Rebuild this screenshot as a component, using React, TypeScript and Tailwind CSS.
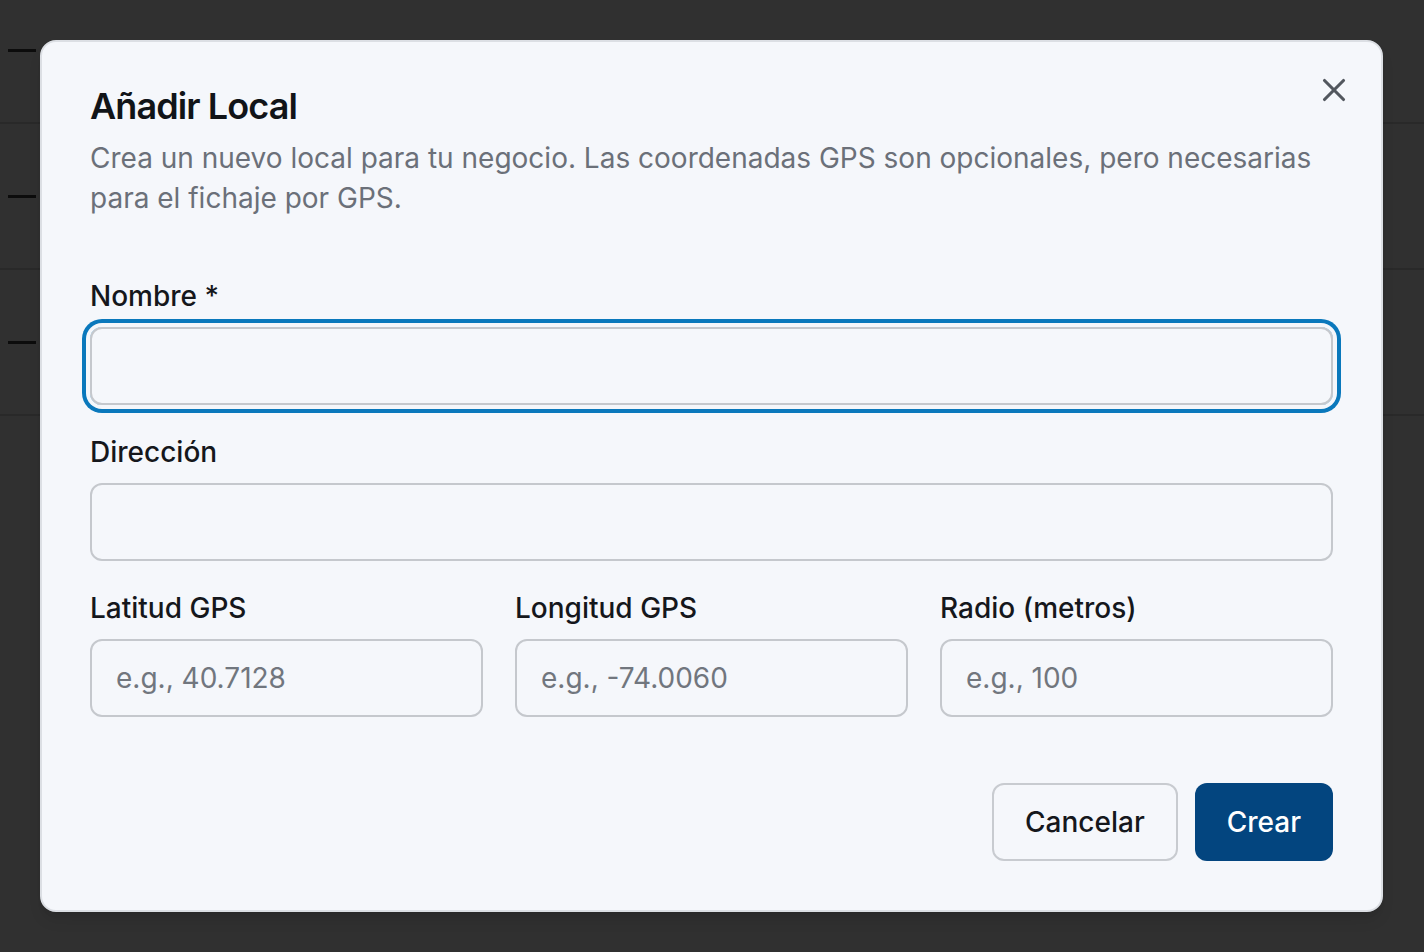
import React from 'react'
import { X } from 'lucide-react'

const rows = [0, 1, 2]

function Field({ label, placeholder, focused }: { label: string; placeholder?: string; focused?: boolean }) {
  return (
    <div className="flex flex-col gap-[17px]">
      <label className="text-[28px] leading-none font-medium text-[#15171c]">{label}</label>
      <input
        placeholder={placeholder}
        className={`h-[78px] w-full rounded-[12px] border-2 border-[#c5c8cd] bg-transparent px-[24px] text-[28px] text-[#15171c] placeholder:text-[#71767e] outline-none ${
          focused ? 'ring-[4px] ring-[#0a78bc] ring-offset-[4px] ring-offset-[#f5f7fb]' : ''
        }`}
      />
    </div>
  )
}

export default function App() {
  return (
    <div className="relative h-[952px] w-[1424px] overflow-hidden bg-[#303030] font-['Inter',sans-serif]">
      {/* page behind the dialog */}
      <div className="-mt-[22px]">
        {rows.map((r) => (
          <div key={r} className="flex h-[146px] items-center border-b-2 border-[#292929] pl-[8px]">
            <span className="h-[3px] w-[28px] bg-[#0c0c0c]" />
          </div>
        ))}
      </div>

      {/* dialog */}
      <div className="absolute inset-0 pt-[40px] pl-[40px]">
        <div className="relative w-[1343px] rounded-[16px] border-2 border-[#dcdfe4] bg-[#f5f7fb] px-[48px] pt-[46px] pb-[49px] shadow-lg">
          <button className="absolute right-[28px] top-[29px] text-[#52575e]" aria-label="Cerrar">
            <X size={38} strokeWidth={2} />
          </button>

          <div className="flex flex-col gap-[14px]">
            <h2 className="text-[36px] leading-none font-semibold tracking-tight text-[#111418]">Añadir Local</h2>
            <p className="text-[28px] leading-[40px] text-[#6b7079]">
              Crea un nuevo local para tu negocio. Las coordenadas GPS son opcionales, pero necesarias para el fichaje por GPS.
            </p>
          </div>

          <div className="mt-[64px] flex flex-col gap-[33px]">
            <Field label="Nombre *" focused />
            <Field label="Dirección" />
            <div className="grid grid-cols-3 gap-[32px]">
              <Field label="Latitud GPS" placeholder="e.g., 40.7128" />
              <Field label="Longitud GPS" placeholder="e.g., -74.0060" />
              <Field label="Radio (metros)" placeholder="e.g., 100" />
            </div>
          </div>

          <div className="mt-[66px] flex justify-end gap-[17px]">
            <button className="h-[78px] rounded-[12px] border-2 border-[#c8cbd0] bg-transparent px-[31px] text-[28px] font-medium text-[#15171c]">
              Cancelar
            </button>
            <button className="h-[78px] rounded-[12px] bg-[#03457f] px-[32px] text-[28px] font-medium text-white">
              Crear
            </button>
          </div>
        </div>
      </div>
    </div>
  )
}
